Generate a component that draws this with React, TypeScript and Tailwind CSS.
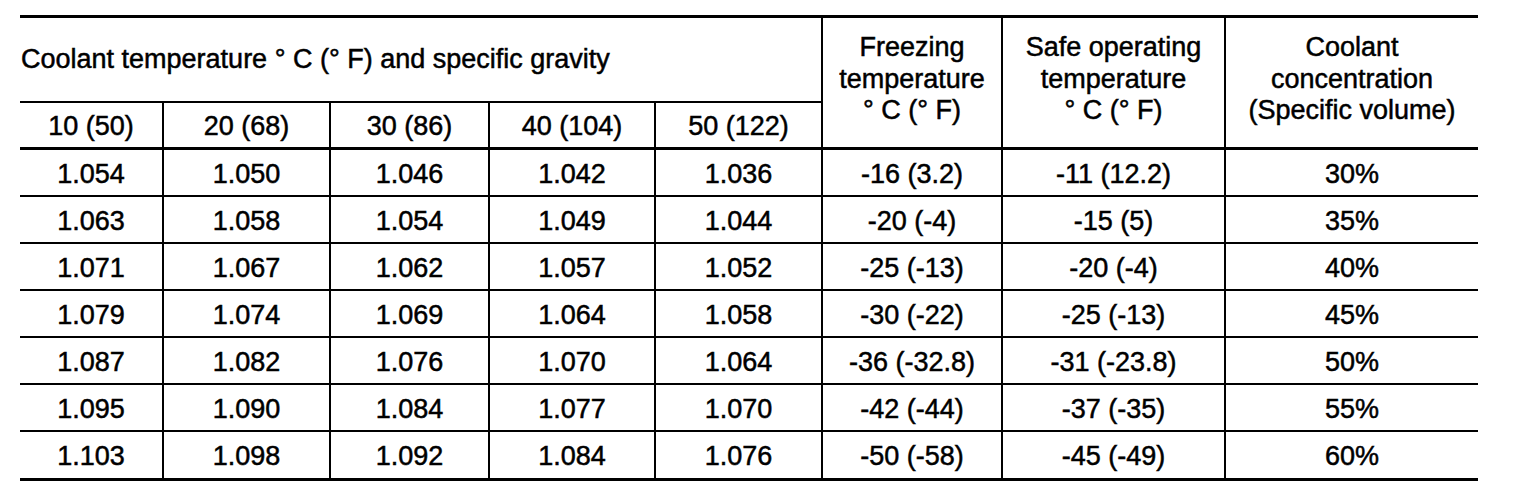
import React from 'react';

const temps = ['10 (50)', '20 (68)', '30 (86)', '40 (104)', '50 (122)'];

const rows = [
  ['1.054', '1.050', '1.046', '1.042', '1.036', '-16 (3.2)', '-11 (12.2)', '30%'],
  ['1.063', '1.058', '1.054', '1.049', '1.044', '-20 (-4)', '-15 (5)', '35%'],
  ['1.071', '1.067', '1.062', '1.057', '1.052', '-25 (-13)', '-20 (-4)', '40%'],
  ['1.079', '1.074', '1.069', '1.064', '1.058', '-30 (-22)', '-25 (-13)', '45%'],
  ['1.087', '1.082', '1.076', '1.070', '1.064', '-36 (-32.8)', '-31 (-23.8)', '50%'],
  ['1.095', '1.090', '1.084', '1.077', '1.070', '-42 (-44)', '-37 (-35)', '55%'],
  ['1.103', '1.098', '1.092', '1.084', '1.076', '-50 (-58)', '-45 (-49)', '60%'],
];

const widths = ['w-[144px]', 'w-[167px]', 'w-[159px]', 'w-[166px]', 'w-[167px]', 'w-[180px]', 'w-[223px]', 'w-[252px]'];

export default function App() {
  return (
    <div className="min-h-[500px] bg-white pl-[20px] pt-[15px] font-['Liberation_Sans',Arial,sans-serif] text-[27px] text-black [-webkit-text-stroke:0.5px_black]">
      <table className="w-[1458px] table-fixed border-separate border-spacing-0">
        <colgroup>
          {widths.map((w, i) => (
            <col key={i} className={w} />
          ))}
        </colgroup>
        <thead>
          <tr className="h-[88px]">
            <th
              colSpan={5}
              className="border-t-[3px] border-r-2 border-b-2 border-black pl-[1px] text-left align-middle font-normal leading-none"
            >
              Coolant temperature ° C (° F) and specific gravity
            </th>
            <th
              rowSpan={2}
              className="border-t-[3px] border-r-2 border-b-[3px] border-black pt-[14px] align-top font-normal leading-[31.5px]"
            >
              Freezing
              <br />
              temperature
              <br />° C (° F)
            </th>
            <th
              rowSpan={2}
              className="border-t-[3px] border-r-2 border-b-[3px] border-black pt-[14px] align-top font-normal leading-[31.5px]"
            >
              Safe operating
              <br />
              temperature
              <br />° C (° F)
            </th>
            <th
              rowSpan={2}
              className="border-t-[3px] border-b-[3px] border-black pt-[14px] align-top font-normal leading-[31.5px]"
            >
              Coolant
              <br />
              concentration
              <br />
              (Specific volume)
            </th>
          </tr>
          <tr className="h-[47px]">
            {temps.map((t) => (
              <th key={t} className="border-r-2 border-b-[3px] border-black pt-[2px] align-middle font-normal leading-none">
                {t}
              </th>
            ))}
          </tr>
        </thead>
        <tbody>
          {rows.map((row, r) => (
            <tr key={r} className={r === rows.length - 1 ? 'h-[49px]' : 'h-[47px]'}>
              {row.map((cell, c) => (
                <td
                  key={c}
                  className={`${c < 7 ? 'border-r-2' : ''} ${
                    r === rows.length - 1 ? 'border-b-[3px]' : 'border-b-2'
                  } border-black pt-[3px] text-center align-middle leading-none`}
                >
                  {cell}
                </td>
              ))}
            </tr>
          ))}
        </tbody>
      </table>
    </div>
  );
}
